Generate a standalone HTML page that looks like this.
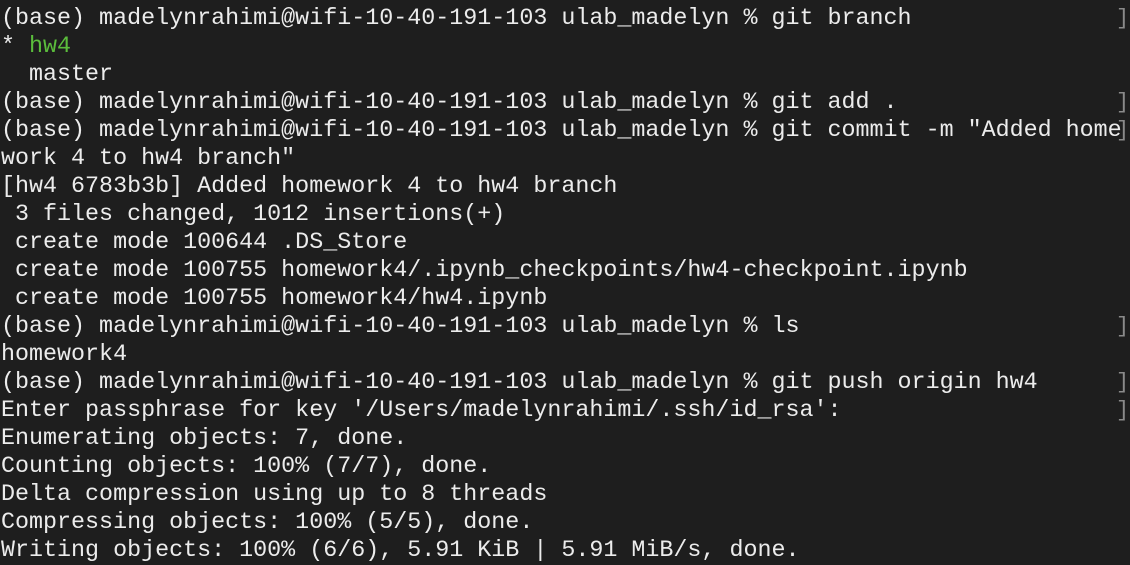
<!DOCTYPE html>
<html><head><style>
body{margin:0;background:#1e1e1e;width:1130px;height:562px;overflow:hidden;position:relative}
pre{margin:0;position:absolute;left:1px;top:5px;font-family:"Liberation Mono",monospace;font-size:23.35px;line-height:28px;color:#ececec;letter-spacing:0}
.g{color:#5bbd3c}
.b{position:absolute;left:1116px;color:#8a8a8a;font-family:"Liberation Mono",monospace;font-size:22px;line-height:28px}
</style></head><body>
<pre>(base) madelynrahimi@wifi-10-40-191-103 ulab_madelyn % git branch
* <span class="g">hw4</span>
  master
(base) madelynrahimi@wifi-10-40-191-103 ulab_madelyn % git add .
(base) madelynrahimi@wifi-10-40-191-103 ulab_madelyn % git commit -m "Added home
work 4 to hw4 branch"
[hw4 6783b3b] Added homework 4 to hw4 branch
 3 files changed, 1012 insertions(+)
 create mode 100644 .DS_Store
 create mode 100755 homework4/.ipynb_checkpoints/hw4-checkpoint.ipynb
 create mode 100755 homework4/hw4.ipynb
(base) madelynrahimi@wifi-10-40-191-103 ulab_madelyn % ls
homework4
(base) madelynrahimi@wifi-10-40-191-103 ulab_madelyn % git push origin hw4
Enter passphrase for key '/Users/madelynrahimi/.ssh/id_rsa':
Enumerating objects: 7, done.
Counting objects: 100% (7/7), done.
Delta compression using up to 8 threads
Compressing objects: 100% (5/5), done.
Writing objects: 100% (6/6), 5.91 KiB | 5.91 MiB/s, done.</pre>
<div class="b" style="top:5px">]</div>
<div class="b" style="top:89px">]</div>
<div class="b" style="top:117px">]</div>
<div class="b" style="top:313px">]</div>
<div class="b" style="top:369px">]</div>
<div class="b" style="top:397px">]</div>
</body></html>
